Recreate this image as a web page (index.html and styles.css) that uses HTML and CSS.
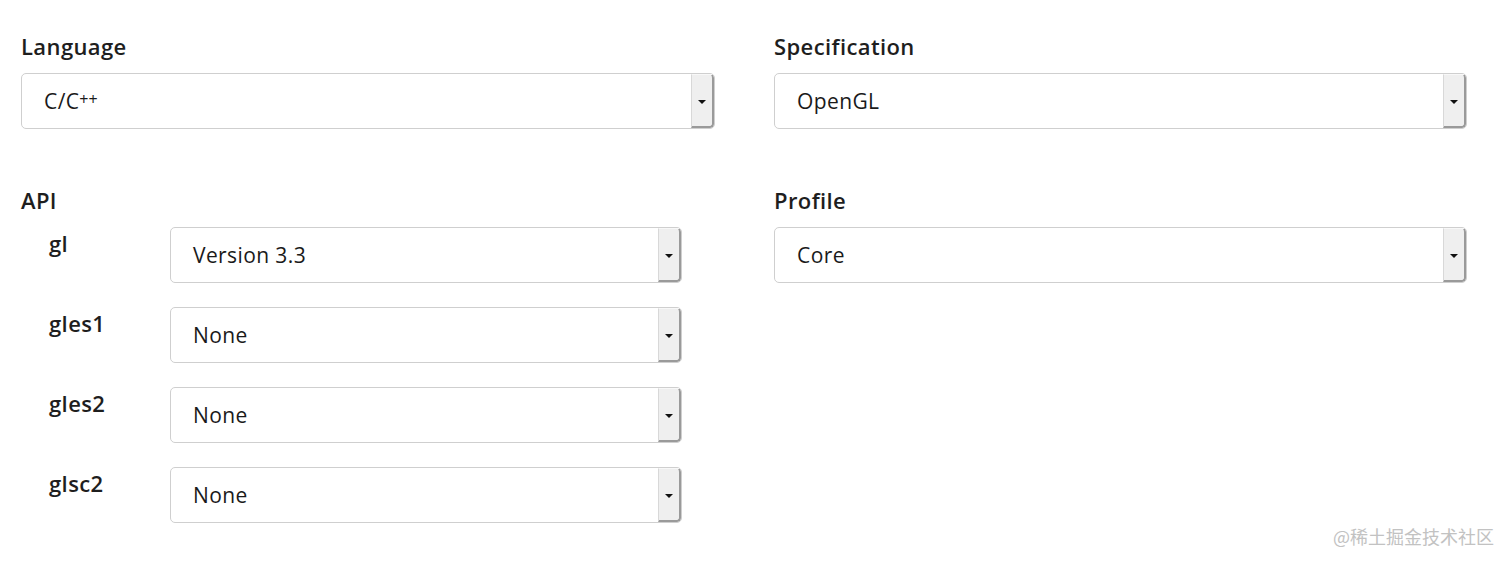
FILE: index.html
```html
<!DOCTYPE html>
<html>
<head>
<meta charset="utf-8">
<link rel="stylesheet" href="styles.css">
</head>
<body>
<div class="page">
  <div class="grid">
    <div class="field">
      <div class="label">Language</div>
      <div class="select"><span class="value">C/C<span class="plus">++</span></span><span class="btn"><span class="arrow"></span></span></div>
    </div>
    <div class="field">
      <div class="label">Specification</div>
      <div class="select"><span class="value">OpenGL</span><span class="btn"><span class="arrow"></span></span></div>
    </div>
    <div class="field">
      <div class="label">API</div>
      <div class="api">
        <div class="api-row"><div class="api-label">gl</div><div class="select small"><span class="value">Version 3.3</span><span class="btn"><span class="arrow"></span></span></div></div>
        <div class="api-row"><div class="api-label">gles1</div><div class="select small"><span class="value">None</span><span class="btn"><span class="arrow"></span></span></div></div>
        <div class="api-row"><div class="api-label">gles2</div><div class="select small"><span class="value">None</span><span class="btn"><span class="arrow"></span></span></div></div>
        <div class="api-row"><div class="api-label">glsc2</div><div class="select small"><span class="value">None</span><span class="btn"><span class="arrow"></span></span></div></div>
      </div>
    </div>
    <div class="field">
      <div class="label">Profile</div>
      <div class="select"><span class="value">Core</span><span class="btn"><span class="arrow"></span></span></div>
    </div>
  </div>
  <div class="watermark">@稀土掘金技术社区</div>
</div>
</body>
</html>
```
FILE: styles.css
```css
html, body {
  margin: 0;
  padding: 0;
  background: #ffffff;
}
body {
  font-family: "Open Sans", Lato, sans-serif;
  color: #222;
  width: 1512px;
  height: 564px;
  overflow: hidden;
}
.page {
  position: relative;
  width: 1512px;
  height: 564px;
  padding: 33px 0 0 21px;
  box-sizing: border-box;
}
.grid {
  display: grid;
  grid-template-columns: 694px 693px;
  column-gap: 59px;
  row-gap: 58px;
  align-items: start;
}
.label {
  font-size: 22px;
  font-weight: 600;
  line-height: 26px;
  height: 26px;
  margin-bottom: 14px;
  color: #1e1e1e;
  letter-spacing: 0.4px;
}
.select {
  display: flex;
  align-items: stretch;
  height: 56px;
  box-sizing: border-box;
  border: 1px solid #cfcfcf;
  border-radius: 5px;
  background: #fff;
  overflow: hidden;
}
.select .value {
  flex: 1;
  display: flex;
  align-items: center;
  padding-left: 22px;
  font-size: 21px;
  letter-spacing: 0.4px;
  color: #1a1a1a;
  padding-bottom: 1px;
}
.plus {
  font-size: 16px;
  position: relative;
  top: -2px;
  letter-spacing: 0;
}
.btn {
  width: 20px;
  background: #efefef;
  border-left: 1px solid #d8d8d8;
  border-right: 2px solid #9a9a9a;
  border-bottom: 2px solid #9a9a9a;
  border-top: 1px solid #f8f8f8;
  display: flex;
  align-items: center;
  justify-content: center;
  border-radius: 0 4px 4px 0;
}
.arrow {
  width: 0;
  height: 0;
  border-left: 4px solid transparent;
  border-right: 4px solid transparent;
  border-top: 4px solid #111;
  margin-top: 2px;
}
.api {
  display: flex;
  flex-direction: column;
  gap: 24px;
  padding-left: 28px;
}
.api-row {
  display: flex;
  align-items: flex-start;
}
.api-label {
  width: 121px;
  font-size: 22px;
  font-weight: 600;
  line-height: 26px;
  padding-top: 3px;
  color: #1e1e1e;
  letter-spacing: 0.4px;
}
.select.small {
  width: 512px;
}
.watermark {
  position: absolute;
  right: 18px;
  bottom: 15px;
  font-family: "Noto Sans CJK SC", sans-serif;
  font-size: 18px;
  color: #c2c2c2;
}
```
